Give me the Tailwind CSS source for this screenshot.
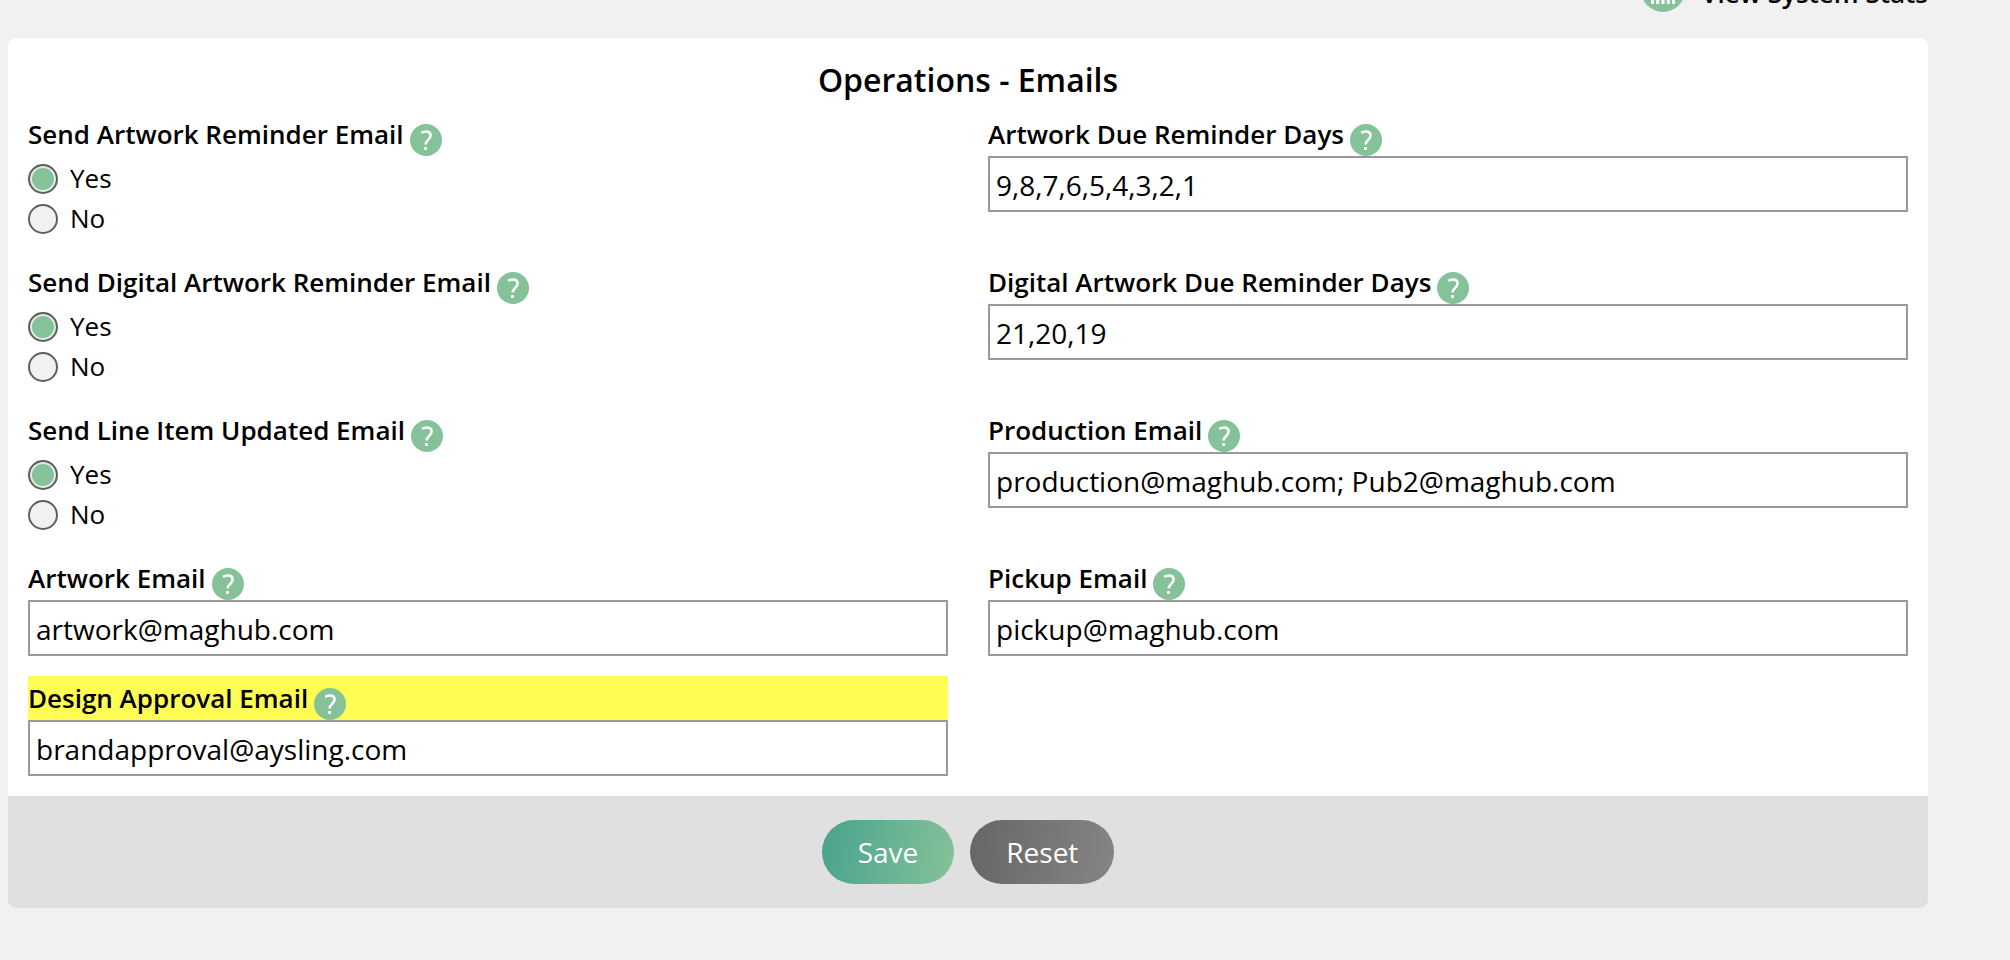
<!DOCTYPE html>
<html lang="en">
<head>
  <meta charset="UTF-8" />
  <meta name="viewport" content="width=device-width, initial-scale=1.0"/>
  <title>Operations - Emails</title>
  <script src="https://cdn.jsdelivr.net/npm/@tailwindcss/browser@4"></script>
</head>
<body class="bg-[#f1f1f1] text-black font-['Open_Sans',sans-serif] overflow-x-hidden">
  <svg class="hidden">
    <symbol id="help" viewBox="0 0 32 32">
      <circle cx="16" cy="16" r="16" fill="#85c29a"/>
      <path d="M11.2 8.9c1.4-.9 2.8-1.4 4.5-1.4 2.9 0 4.9 1.5 4.9 4.1 0 2.2-1.1 3.3-2.7 4.7-1.6 1.3-2.2 2.1-2.2 4.3" fill="none" stroke="#fff" stroke-width="2.6"/>
      <rect x="14" y="23" width="3" height="3" rx="1" fill="#fff"/>
    </symbol>
  </svg>

  <div class="pl-2 pr-[82px]">
    <div class="h-[38px] flex justify-end items-start">
      <a href="#" class="-mt-8 flex items-start gap-4 text-[26px] leading-[50px] font-semibold">
        <svg class="size-11" viewBox="0 0 44 44">
          <circle cx="22" cy="22" r="22" fill="#85c29a"/>
          <path d="M11.5 24v12M16.7 18v18M22 22v14M27.3 14v22M32.5 10v26" stroke="#fff" stroke-width="3"/>
        </svg>
        View System Stats
      </a>
    </div>

    <form class="bg-white rounded-lg overflow-hidden">
      <h1 class="h-[74px] pt-5 text-center text-[32px] leading-[44px] font-semibold">Operations - Emails</h1>

      <div class="grid grid-cols-2 gap-x-10 gap-y-5 px-5 pb-5">
        <fieldset>
          <legend class="w-full h-11 flex items-end gap-[6px] text-[26px] leading-[44px] font-semibold">
            Send Artwork Reminder Email <svg class="size-8"><use href="#help"/></svg>
          </legend>
          <div class="pt-2 pb-[6px] flex flex-col gap-[10px] text-[26px] leading-[28px]">
            <label class="flex items-start gap-3"><input type="radio" name="artwork" checked class="appearance-none size-[30px] rounded-full border-2 border-[#606062] bg-[#f1f1f1] checked:bg-[#85c29a] checked:inset-ring-2 checked:inset-ring-[#e4ebe6]" /> Yes</label>
            <label class="flex items-start gap-3"><input type="radio" name="artwork" class="appearance-none size-[30px] rounded-full border-2 border-[#606062] bg-[#f1f1f1] checked:bg-[#85c29a] checked:inset-ring-2 checked:inset-ring-[#e4ebe6]" /> No</label>
          </div>
        </fieldset>
        <div>
          <label for="artworkDays" class="h-11 flex items-end gap-[6px] text-[26px] leading-[44px] font-semibold">
            Artwork Due Reminder Days <svg class="size-8"><use href="#help"/></svg>
          </label>
          <input id="artworkDays" type="text" value="9,8,7,6,5,4,3,2,1" class="block w-full h-14 px-[6px] pt-[2px] border-2 border-[#999] bg-white text-[28px]" />
        </div>

        <fieldset>
          <legend class="w-full h-11 flex items-end gap-[6px] text-[26px] leading-[44px] font-semibold">
            Send Digital Artwork Reminder Email <svg class="size-8"><use href="#help"/></svg>
          </legend>
          <div class="pt-2 pb-[6px] flex flex-col gap-[10px] text-[26px] leading-[28px]">
            <label class="flex items-start gap-3"><input type="radio" name="digital" checked class="appearance-none size-[30px] rounded-full border-2 border-[#606062] bg-[#f1f1f1] checked:bg-[#85c29a] checked:inset-ring-2 checked:inset-ring-[#e4ebe6]" /> Yes</label>
            <label class="flex items-start gap-3"><input type="radio" name="digital" class="appearance-none size-[30px] rounded-full border-2 border-[#606062] bg-[#f1f1f1] checked:bg-[#85c29a] checked:inset-ring-2 checked:inset-ring-[#e4ebe6]" /> No</label>
          </div>
        </fieldset>
        <div>
          <label for="digitalDays" class="h-11 flex items-end gap-[6px] text-[26px] leading-[44px] font-semibold">
            Digital Artwork Due Reminder Days <svg class="size-8"><use href="#help"/></svg>
          </label>
          <input id="digitalDays" type="text" value="21,20,19" class="block w-full h-14 px-[6px] pt-[2px] border-2 border-[#999] bg-white text-[28px]" />
        </div>

        <fieldset>
          <legend class="w-full h-11 flex items-end gap-[6px] text-[26px] leading-[44px] font-semibold">
            Send Line Item Updated Email <svg class="size-8"><use href="#help"/></svg>
          </legend>
          <div class="pt-2 pb-[6px] flex flex-col gap-[10px] text-[26px] leading-[28px]">
            <label class="flex items-start gap-3"><input type="radio" name="lineItem" checked class="appearance-none size-[30px] rounded-full border-2 border-[#606062] bg-[#f1f1f1] checked:bg-[#85c29a] checked:inset-ring-2 checked:inset-ring-[#e4ebe6]" /> Yes</label>
            <label class="flex items-start gap-3"><input type="radio" name="lineItem" class="appearance-none size-[30px] rounded-full border-2 border-[#606062] bg-[#f1f1f1] checked:bg-[#85c29a] checked:inset-ring-2 checked:inset-ring-[#e4ebe6]" /> No</label>
          </div>
        </fieldset>
        <div>
          <label for="productionEmail" class="h-11 flex items-end gap-[6px] text-[26px] leading-[44px] font-semibold">
            Production Email <svg class="size-8"><use href="#help"/></svg>
          </label>
          <input id="productionEmail" type="text" value="production@maghub.com; Pub2@maghub.com" class="block w-full h-14 px-[6px] pt-[2px] border-2 border-[#999] bg-white text-[28px]" />
        </div>

        <div>
          <label for="artworkEmail" class="h-11 flex items-end gap-[6px] text-[26px] leading-[44px] font-semibold">
            Artwork Email <svg class="size-8"><use href="#help"/></svg>
          </label>
          <input id="artworkEmail" type="text" value="artwork@maghub.com" class="block w-full h-14 px-[6px] pt-[2px] border-2 border-[#999] bg-white text-[28px]" />
        </div>
        <div>
          <label for="pickupEmail" class="h-11 flex items-end gap-[6px] text-[26px] leading-[44px] font-semibold">
            Pickup Email <svg class="size-8"><use href="#help"/></svg>
          </label>
          <input id="pickupEmail" type="text" value="pickup@maghub.com" class="block w-full h-14 px-[6px] pt-[2px] border-2 border-[#999] bg-white text-[28px]" />
        </div>

        <div>
          <label for="designEmail" class="h-11 flex items-end gap-[6px] bg-[#fffd54] text-[26px] leading-[44px] font-semibold">
            Design Approval Email <svg class="size-8"><use href="#help"/></svg>
          </label>
          <input id="designEmail" type="text" value="brandapproval@aysling.com" class="block w-full h-14 px-[6px] pt-[2px] border-2 border-[#999] bg-white text-[28px]" />
        </div>
      </div>

      <div class="bg-[#e0e0e0] py-6 flex justify-center gap-4">
        <button type="submit" class="h-16 px-9 rounded-full bg-linear-[100deg,#48a38c,#85c29a] text-white text-[28px] font-medium">Save</button>
        <button type="reset" class="h-16 px-9 rounded-full bg-linear-[100deg,#666,#858585] text-white text-[28px] font-medium">Reset</button>
      </div>
    </form>
  </div>
</body>
</html>
